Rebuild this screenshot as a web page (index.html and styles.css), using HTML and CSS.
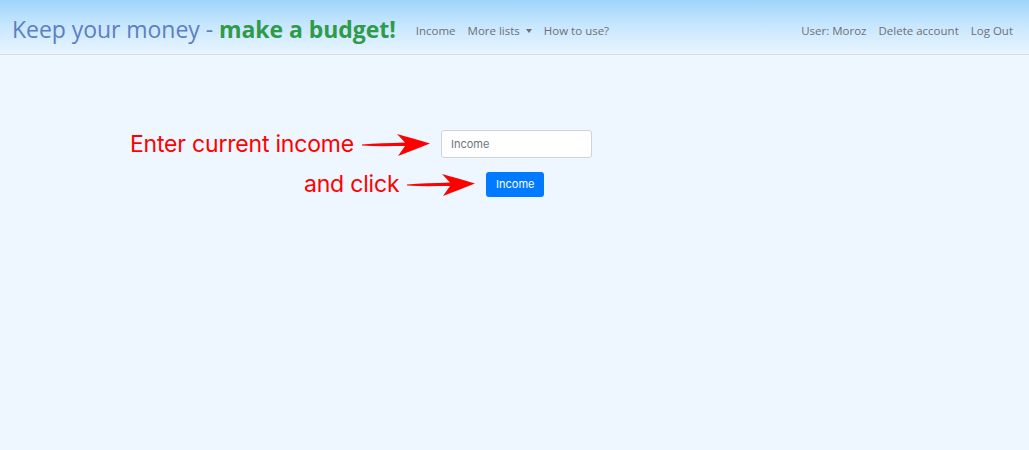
FILE: index.html
```html
<!DOCTYPE html>
<html lang="en">
<head>
<meta charset="utf-8">
<title>Keep your money</title>
<link rel="stylesheet" href="styles.css">
</head>
<body>
<nav class="navbar">
  <a class="brand" href="#"><span class="brand-main">Keep your money - </span><b class="brand-accent">make a budget!</b></a>
  <ul class="nav-left">
    <li><a href="#">Income</a></li>
    <li><a href="#" class="dropdown">More lists <span class="caret"></span></a></li>
    <li><a href="#">How to use?</a></li>
  </ul>
  <ul class="nav-right">
    <li><a href="#">User: Moroz</a></li>
    <li><a href="#">Delete account</a></li>
    <li><a href="#">Log Out</a></li>
  </ul>
</nav>
<main class="content">
  <div class="row row-input">
    <span class="hint">Enter current income</span>
    <svg class="arrow" width="70" height="28" viewBox="0 0 70 28"><path d="M1 14.5 C14 13 28 13.5 44 12.5 L36 4 C46 7 58 10 69 13.5 C58 18 47 22 37 26 L44 16 C30 16 15 16.5 1 15.5 Z" fill="#ff0000"/></svg>
    <input class="field" type="text" placeholder="Income">
  </div>
  <div class="row row-button">
    <span class="hint">and click</span>
    <svg class="arrow" width="70" height="28" viewBox="0 0 70 28"><path d="M1 14.5 C14 13 28 13.5 44 12.5 L36 4 C46 7 58 10 69 13.5 C58 18 47 22 37 26 L44 16 C30 16 15 16.5 1 15.5 Z" fill="#ff0000"/></svg>
    <button class="btn" type="button">Income</button>
  </div>
</main>
</body>
</html>
```

FILE: styles.css
```css
* { box-sizing: border-box; }
html, body { margin: 0; padding: 0; }
body {
  background: #eef7ff;
  font-family: "Open Sans", "Noto Sans", sans-serif;
  height: 450px;
  overflow: hidden;
}
.navbar {
  height: 55px;
  display: flex;
  align-items: center;
  padding: 4px 16px 0 12px;
  background: linear-gradient(to bottom, #9ed5fc 0%, #c6e6fe 45%, #e9f5ff 100%);
  border-bottom: 1px solid #d9dde2;
}
.brand {
  font-size: 23px;
  text-decoration: none;
  white-space: nowrap;
  margin-right: 20px;
  letter-spacing: -0.05px;
}
.brand-main { color: #5b80c2; }
.brand-accent { color: #2f9b4a; font-weight: 700; }
.nav-left, .nav-right {
  list-style: none;
  margin: 0;
  padding: 0;
  display: flex;
  gap: 12px;
}
.nav-right { margin-left: auto; }
.nav-left a, .nav-right a {
  font-size: 11.5px;
  color: #6f6f74;
  text-decoration: none;
  white-space: nowrap;
}
.caret {
  display: inline-block;
  width: 0; height: 0;
  border-left: 3.5px solid transparent;
  border-right: 3.5px solid transparent;
  border-top: 4px solid #6f6f74;
  vertical-align: 2px;
  margin-left: 3px;
}
.content { padding-top: 75px; }
.row {
  display: flex;
  align-items: center;
  height: 28px;
}
.row-input { padding-left: 130px; }
.row-button { padding-left: 304px; margin-top: 12px; }
.hint {
  font-family: Inter, Roboto, sans-serif;
  font-size: 23px;
  color: #ff0000;
  letter-spacing: -0.2px;
}
.arrow { margin-left: 7px; margin-right: 10px; }
.field {
  width: 151px;
  height: 28px;
  border: 1px solid #ced4da;
  border-radius: 3px;
  background: #fff;
  padding: 0 9px;
  font-family: Inter, Roboto, sans-serif;
  font-size: 11px;
  color: #495057;
}
.field::placeholder { color: #6c757d; }
.btn {
  width: 58px;
  height: 25px;
  border: none;
  border-radius: 3px;
  background: #007bff;
  color: #fff;
  font-family: Inter, Roboto, sans-serif;
  font-size: 11px;
  padding: 0;
}
```
